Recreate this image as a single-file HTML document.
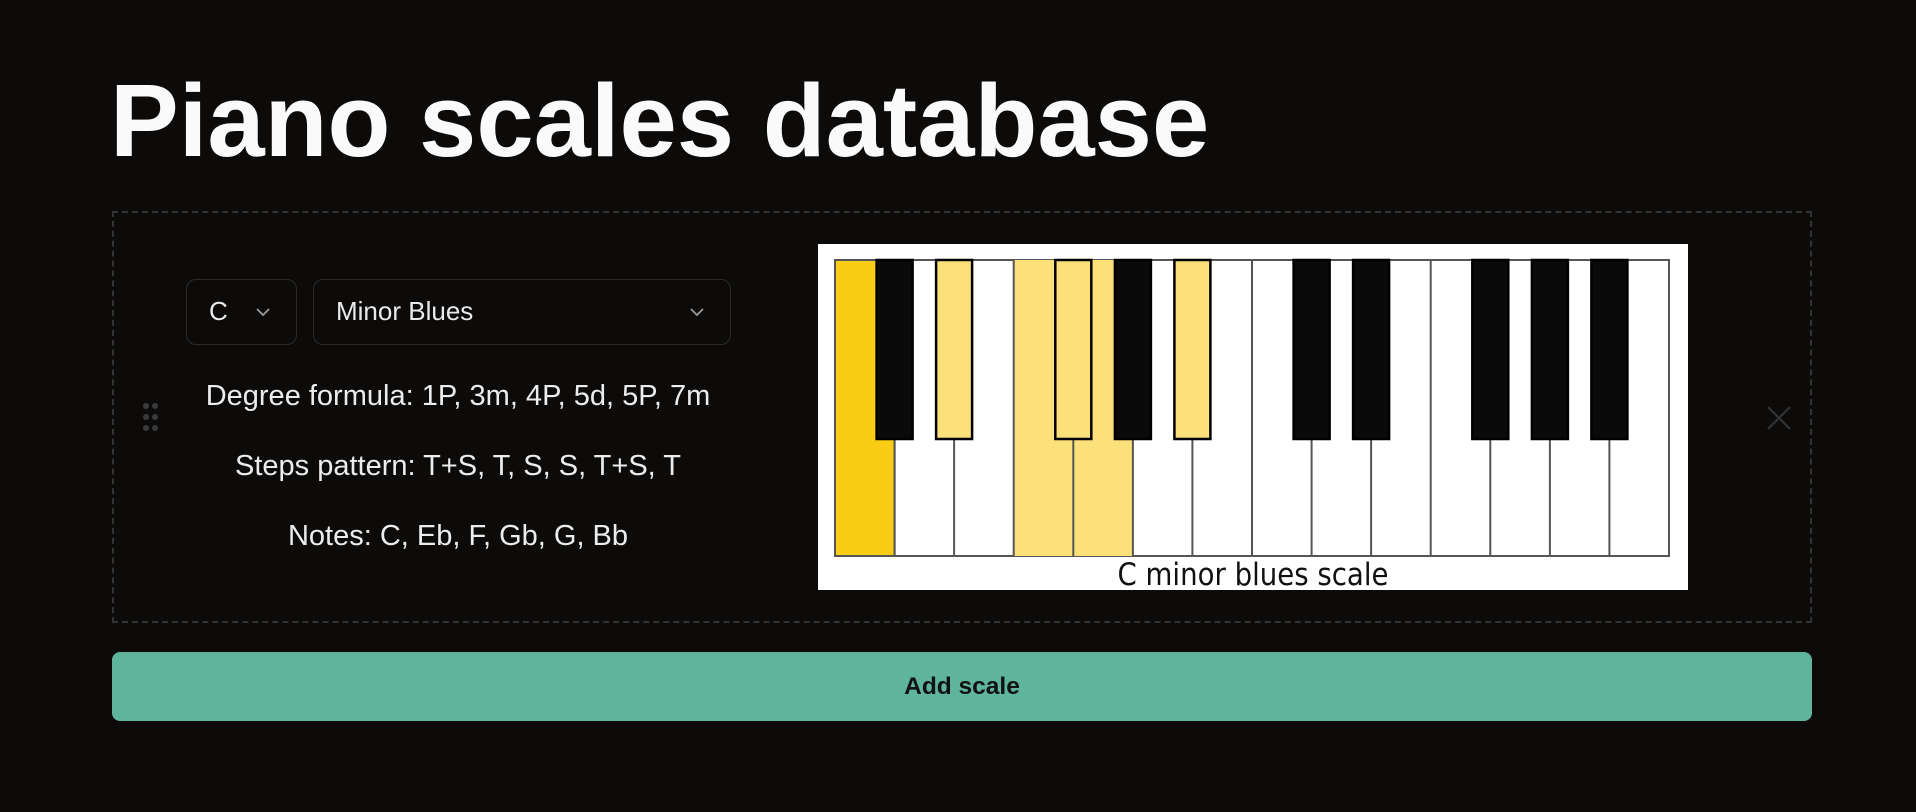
<!DOCTYPE html>
<html><head><meta charset="utf-8">
<style>
html,body{margin:0;padding:0;background:#0c0b0a;width:1916px;height:812px;overflow:hidden;font-family:"Liberation Sans",sans-serif;color:#ececec}
.abs{position:absolute}
h1{position:absolute;left:110px;top:69px;margin:0;font-size:103px;line-height:103px;font-weight:700;color:#fafafa;white-space:nowrap}
.box{left:112px;top:211px;width:1696px;height:408px;border:2px dashed #333}
.sel{border:1.5px solid #2b2b2b;border-radius:10px;height:66px;box-sizing:border-box;font-size:26px;line-height:63px;color:#eaeaea}
.line{font-size:29px;width:700px;left:108px;text-align:center;white-space:nowrap}
.btn{left:112px;top:652px;width:1700px;height:69px;background:#5fb49c;border-radius:8px;text-align:center;line-height:69px;font-size:24.5px;font-weight:700;color:#121212}
</style></head><body>
<h1>Piano scales database</h1>
<div class="abs box"></div>

<div class="abs sel" style="left:186px;top:279px;width:111px;padding-left:22px">C</div>
<svg class="abs" style="left:255px;top:306px" width="16" height="12" viewBox="0 0 16 12"><path d="M2 3 L8 9 L14 3" fill="none" stroke="#9a9a9a" stroke-width="1.8"/></svg>
<div class="abs sel" style="left:313px;top:279px;width:418px;padding-left:22px">Minor Blues</div>
<svg class="abs" style="left:689px;top:306px" width="16" height="12" viewBox="0 0 16 12"><path d="M2 3 L8 9 L14 3" fill="none" stroke="#9a9a9a" stroke-width="1.8"/></svg>

<div class="abs line" style="top:380px">Degree formula: 1P, 3m, 4P, 5d, 5P, 7m</div>
<div class="abs line" style="top:450px">Steps pattern: T+S, T, S, S, T+S, T</div>
<div class="abs line" style="top:520px">Notes: C, Eb, F, Gb, G, Bb</div>

<svg class="abs" style="left:141px;top:401px" width="20" height="34" viewBox="0 0 20 34">
<g fill="#3a3a3a"><circle cx="5" cy="5" r="3"/><circle cx="14" cy="5" r="3"/><circle cx="5" cy="16" r="3"/><circle cx="14" cy="16" r="3"/><circle cx="5" cy="27" r="3"/><circle cx="14" cy="27" r="3"/></g></svg>

<svg class="abs" style="left:1765px;top:404px" width="28" height="28" viewBox="0 0 28 28"><path d="M3 3 L25 25 M25 3 L3 25" stroke="#333" stroke-width="2.2"/></svg>

<svg class="abs" style="left:818px;top:244px" width="870" height="346" viewBox="818 244 870 346">
<rect x="818" y="244" width="870" height="346" fill="#fff"/>
<g stroke="#555" stroke-width="2">
<rect x="835" y="260" width="834" height="296" fill="#fff"/>
<rect x="835" y="260" width="59.57" height="296" fill="#f9cc15"/>
<rect x="1013.7" y="260" width="59.57" height="296" fill="#fce07a" stroke="none"/>
<rect x="1073.3" y="260" width="59.57" height="296" fill="#fce07a" stroke="none"/>
<path d="M894.6 260V556 M954.1 260V556 M1013.7 260V556 M1073.3 260V556 M1132.9 260V556 M1192.4 260V556 M1252 260V556 M1311.6 260V556 M1371.1 260V556 M1430.7 260V556 M1490.3 260V556 M1549.9 260V556 M1609.4 260V556" fill="none"/>
</g>
<g stroke="#000" stroke-width="2.5">
<rect x="876.6" y="260" width="36" height="179" fill="#0a0a0a"/>
<rect x="936.1" y="260" width="36" height="179" fill="#fce07a"/>
<rect x="1055.3" y="260" width="36" height="179" fill="#fce07a"/>
<rect x="1114.9" y="260" width="36" height="179" fill="#0a0a0a"/>
<rect x="1174.4" y="260" width="36" height="179" fill="#fce07a"/>
<rect x="1293.6" y="260" width="36" height="179" fill="#0a0a0a"/>
<rect x="1353.1" y="260" width="36" height="179" fill="#0a0a0a"/>
<rect x="1472.3" y="260" width="36" height="179" fill="#0a0a0a"/>
<rect x="1531.9" y="260" width="36" height="179" fill="#0a0a0a"/>
<rect x="1591.4" y="260" width="36" height="179" fill="#0a0a0a"/>
</g>
<text x="1253" y="585" text-anchor="middle" textLength="271" lengthAdjust="spacingAndGlyphs" font-family="DejaVu Sans, sans-serif" font-size="31" fill="#111">C minor blues scale</text>
</svg>

<div class="abs btn">Add scale</div>
</body></html>
